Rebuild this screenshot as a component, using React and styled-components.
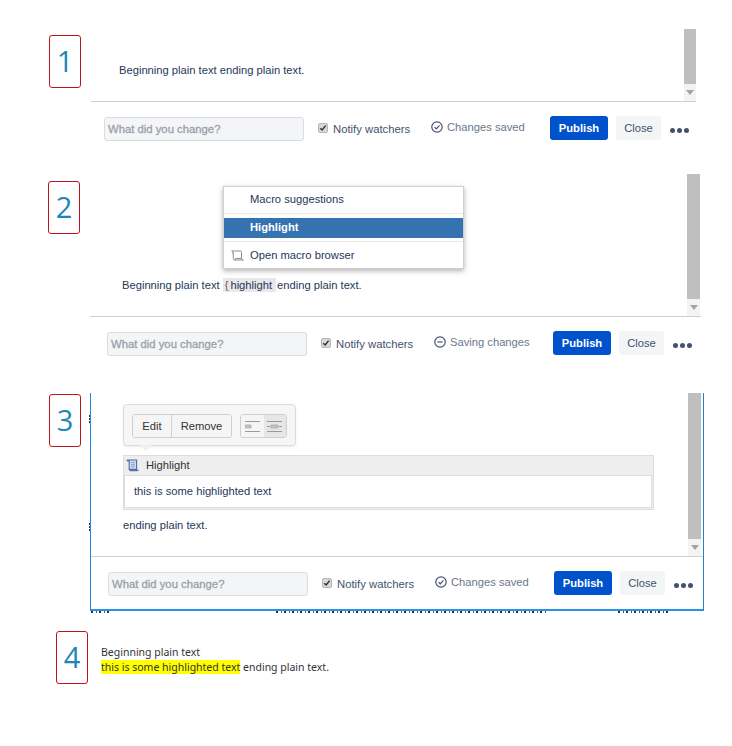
import React from "react";
import styled, { createGlobalStyle } from "styled-components";

const Global = createGlobalStyle`
  html, body { margin: 0; padding: 0; background: #fff; }
  body { font-family: "Liberation Sans", Arial, sans-serif; font-size: 11.2px; color: #172b4d; }
`;

const Page = styled.div`
  width: 732px;
  height: 746px;
  overflow: hidden;
  display: flex;
  flex-direction: column;
`;
const Section = styled.section`
  display: flex;
  align-items: flex-start;
  margin-top: ${(p) => p.$top}px;
  height: ${(p) => p.$height}px;
  padding-left: ${(p) => p.$left}px;
`;
const Badge = styled.div`
  flex: none;
  box-sizing: border-box;
  width: 32px;
  height: 53px;
  margin-top: ${(p) => p.$top}px;
  margin-right: ${(p) => p.$right}px;
  border: 1px solid #c0141c;
  border-radius: 3px;
  color: #1b86b7;
  font-family: "Open Sans", sans-serif;
  font-weight: 400;
  font-size: 29px;
  line-height: 49px;
  text-align: center;
`;
const Panel = styled.div`
  position: relative;
  box-sizing: border-box;
  width: ${(p) => p.$width}px;
  ${(p) => p.$framed && `
    border-left: 1px solid #1f8ae6;
    border-right: 1px solid #2b7fc4;
    border-bottom: 2px solid #2b93e6;
    height: 218px;
  `}
`;
const Body = styled.div`
  display: flex;
  height: ${(p) => p.$height}px;
  border-bottom: 1px solid #cfcfcf;
`;
const Content = styled.div`
  flex: 1;
  min-width: 0;
  padding-top: ${(p) => p.$top}px;
  padding-left: ${(p) => p.$left}px;
  padding-right: 30px;
`;
const Line = styled.div`
  font-size: 11.2px;
  line-height: 16px;
  color: #253858;
  white-space: nowrap;
`;
const Track = styled.div`
  flex: none;
  width: ${(p) => p.$width}px;
  margin-right: ${(p) => p.$right}px;
  display: flex;
  flex-direction: column;
`;
const Thumb = styled.div`
  flex: 1;
  background: #bfbfbf;
`;
const ArrowBox = styled.div`
  flex: none;
  height: 17px;
  background: #f3f3f3;
  display: flex;
  align-items: center;
  justify-content: center;
  &::after {
    content: "";
    border-left: 4px solid transparent;
    border-right: 4px solid transparent;
    border-top: 5px solid #a3a3a3;
  }
`;
const Footer = styled.div`
  display: flex;
  align-items: center;
  height: 24px;
  margin-top: 15px;
  padding-left: ${(p) => p.$left}px;
`;
const Input = styled.div`
  flex: none;
  box-sizing: border-box;
  width: 200px;
  height: 24px;
  padding-left: 3px;
  background: #f4f5f7;
  border: 1px solid #dadce2;
  border-radius: 3px;
  color: #9a9fa8;
  font-size: 11.3px;
  -webkit-text-stroke: 0.3px #9a9fa8;
  line-height: 22px;
`;
const Check = styled.div`
  flex: none;
  box-sizing: border-box;
  width: 10px;
  height: 10px;
  margin: 0 5px 2px 14px;
  background: #d9d9d9;
  border: 1px solid #b5b5b5;
  border-radius: 2px;
  display: flex;
  svg { display: block; }
`;
const Notify = styled.div`
  flex: none;
  width: 98px;
  font-size: 11.3px;
  color: #42526e;
  white-space: nowrap;
`;
const Status = styled.div`
  flex: none;
  width: 119px;
  margin-bottom: 4px;
  display: flex;
  align-items: center;
  gap: 4px;
  font-size: 11.2px;
  color: #6b778c;
  white-space: nowrap;
`;
const Publish = styled.div`
  flex: none;
  width: 58px;
  height: 24px;
  margin-bottom: 2px;
  border-radius: 3px;
  background: #0052cc;
  color: #fff;
  font-weight: 700;
  font-size: 11.2px;
  line-height: 24px;
  text-align: center;
`;
const Close = styled.div`
  flex: none;
  width: 45px;
  height: 24px;
  margin: 0 9px 2px 8px;
  border-radius: 3px;
  background: #f4f5f7;
  color: #42526e;
  font-size: 11.2px;
  line-height: 24px;
  text-align: center;
`;
const Dots = styled.div`
  flex: none;
  display: flex;
  gap: 2px;
  margin-top: 3px;
  span {
    width: 5px;
    height: 5px;
    border-radius: 50%;
    background: #42526e;
  }
`;

const Popup = styled.div`
  position: absolute;
  left: 133px;
  top: 12px;
  box-sizing: border-box;
  width: 241px;
  height: 83px;
  background: #fff;
  border: 1px solid #cfcfcf;
  box-shadow: 0 2px 5px rgba(0, 0, 0, 0.3);
`;
const PopupItem = styled.div`
  box-sizing: border-box;
  display: flex;
  align-items: center;
  height: ${(p) => p.$height}px;
  padding-left: ${(p) => (p.$icon ? 7 : 26)}px;
  padding-bottom: ${(p) => (p.$active ? 2 : 0)}px;
  gap: 6px;
  font-size: 11.2px;
  white-space: nowrap;
  color: ${(p) => (p.$active ? "#fff" : "#253858")};
  font-weight: ${(p) => (p.$active ? 700 : 400)};
  background: ${(p) => (p.$active ? "#3572b0" : "transparent")};
`;
const PopupRule = styled.div`
  height: 1px;
  background: #e9e9e9;
  margin: ${(p) => p.$margin};
`;
const Typed = styled.span`
  background: #e8e8e8;
  padding: 1px 4px 1px 2px;
  margin: 0 1px 0 3px;
  color: #253858;
  i { font-style: normal; color: #8a4a4a; margin-right: 2px; }
`;

const Toolbar = styled.div`
  position: relative;
  box-sizing: border-box;
  width: 173px;
  height: 42px;
  margin-top: 11px;
  padding: 9px 8px;
  display: flex;
  gap: 8px;
  background: #f6f6f6;
  border: 1px solid #dcdcdc;
  border-radius: 4px;
  box-shadow: 0 1px 2px rgba(0, 0, 0, 0.08);
  &::after {
    content: "";
    position: absolute;
    left: 16px;
    bottom: -6px;
    border-left: 6px solid transparent;
    border-right: 6px solid transparent;
    border-top: 6px solid #f1f1f1;
  }
`;
const Group = styled.div`
  display: flex;
  flex: none;
  height: 24px;
  box-sizing: border-box;
  border: 1px solid #cfcfcf;
  border-radius: 3px;
  overflow: hidden;
`;
const ToolButton = styled.div`
  box-sizing: border-box;
  width: ${(p) => p.$width}px;
  text-align: center;
  line-height: 22px;
  font-size: 11.2px;
  color: #333;
  background: #f5f5f5;
  & + & { border-left: 1px solid #cfcfcf; }
`;
const AlignButton = styled.div`
  width: 22.5px;
  display: flex;
  align-items: center;
  justify-content: center;
  background: ${(p) => (p.$active ? "#e6e6e6" : "#f5f5f5")};
`;
const Macro = styled.div`
  box-sizing: border-box;
  width: 531px;
  height: 55px;
  margin-top: 9px;
  border: 1px solid #dddddd;
  background: #eeeeee;
`;
const MacroHead = styled.div`
  display: flex;
  align-items: center;
  gap: 6px;
  height: 18px;
  padding-left: 2px;
  font-size: 11.2px;
  color: #333;
`;
const MacroBody = styled.div`
  box-sizing: border-box;
  height: 33px;
  margin: 1px 1px 0 0;
  background: #fff;
  border: 1px solid #dddddd;
  padding-left: 9px;
  line-height: 30px;
  font-size: 11.2px;
  color: #253858;
`;
const After = styled(Line)`
  margin-top: 7px;
`;
const Residue = styled.div`
  position: absolute;
  left: ${(p) => p.$left}px;
  top: 218px;
  width: ${(p) => p.$width}px;
  height: 2px;
  background: repeating-linear-gradient(90deg, #26324a 0 2px, transparent 2px 5px, #4a5568 5px 6px, transparent 6px 8px);
`;
const SideTick = styled.div`
  position: absolute;
  left: -2px;
  top: ${(p) => p.$top}px;
  width: 1px;
  height: ${(p) => p.$height}px;
  background: repeating-linear-gradient(180deg, #26324a 0 2px, transparent 2px 3px);
`;

const Published = styled.div`
  margin-top: 14px;
  font-family: "Noto Sans", "Open Sans", sans-serif;
  font-size: 10.5px;
  line-height: 15px;
  color: #333;
  white-space: nowrap;
`;
const Mark = styled.mark`
  background: #ffff00;
  color: #333;
`;

const SavedIcon = () => (
  <svg width="12" height="12" viewBox="0 0 12 12" fill="none" stroke="#42526e" strokeWidth="1.2">
    <circle cx="6" cy="6" r="5.2" />
    <path d="M3.6 6.2 5.3 7.8 8.5 4.4" />
  </svg>
);
const SavingIcon = () => (
  <svg width="12" height="12" viewBox="0 0 12 12" fill="none" stroke="#42526e" strokeWidth="1.2">
    <circle cx="6" cy="6" r="5.2" />
    <path d="M3.4 6h5.2" />
  </svg>
);
const BrowserIcon = () => (
  <svg width="13" height="11" viewBox="0 0 13 11" fill="none" stroke="#8b8b8b" strokeWidth="1">
    <path d="M.7 1h8.6c1 0 1.2.6 1.2 1.4V8.5M.7 1c.8 0 1.3.6 1.3 1.4 0 .7-.4 1-.9 1M2.3 2.5V8c0 1 .3 2 1.2 2h8.8c-.9 0-1.8-.6-1.8-1.6H4.5c0 .9-.3 1.6-1 1.6" />
  </svg>
);
const MacroIcon = () => (
  <svg width="14" height="13" viewBox="0 0 14 13">
    <path d="M1 1h9.6v9.4H3.2V3.2C3.2 2 2.3 1 1 1Z" fill="#cfdcee" stroke="#4a6aa5" strokeWidth="1.1" />
    <path d="M3 10.8h10c-.4 1-1 1.4-1.8 1.4H4.5c-.8 0-1.5-.5-1.5-1.4Z" fill="#5676ad" />
    <path d="M5 3.6h3.8M5 5.6h3.8M5 7.6h3.8" stroke="#7f97c2" strokeWidth=".9" />
    <path d="M.6 1.2c.8 0 1.1.8 1.1 1.6" fill="none" stroke="#4a6aa5" />
  </svg>
);
const AlignIcon = ({ center }) => (
  <svg width="15" height="11" viewBox="0 0 15 11" fill="none" stroke="#9a9a9a">
    <path d="M0 .5h15M0 10.5h15" />
    <path d={center ? "M4 4h7v3H4z" : "M0 4h6v3H0z"} fill="#c4c4c4" stroke="#9a9a9a" strokeWidth=".6" />
    {center && <path d="M0 5.5h3M12 5.5h3" />}
  </svg>
);

const EditorFooter = ({ left, saving }) => (
  <Footer $left={left}>
    <Input>What did you change?</Input>
    <Check>
      <svg width="8" height="8" viewBox="0 0 8 8" fill="none" stroke="#333" strokeWidth="1.5">
        <path d="M1.2 4.2 3.2 6 6.6 1.6" />
      </svg>
    </Check>
    <Notify>Notify watchers</Notify>
    <Status>
      {saving ? <SavingIcon /> : <SavedIcon />}
      {saving ? "Saving changes" : "Changes saved"}
    </Status>
    <Publish>Publish</Publish>
    <Close>Close</Close>
    <Dots>
      <span />
      <span />
      <span />
    </Dots>
  </Footer>
);

const Scrollbar = ({ width = 12, right = 0 }) => (
  <Track $width={width} $right={right}>
    <Thumb />
    <ArrowBox />
  </Track>
);

export default function App() {
  return (
    <Page>
      <Global />
      <Section $top={29} $height={121} $left={49}>
        <Badge $top={6} $right={10}>1</Badge>
        <Panel $width={605}>
          <Body $height={72}>
            <Content $top={33} $left={28}>
              <Line>Beginning plain text ending plain text.</Line>
            </Content>
            <Scrollbar />
          </Body>
          <EditorFooter left={13} />
        </Panel>
      </Section>

      <Section $top={24} $height={195} $left={48}>
        <Badge $top={7} $right={10}>2</Badge>
        <Panel $width={611}>
          <Popup>
            <PopupItem $height={24}>Macro suggestions</PopupItem>
            <PopupRule $margin="2px 0 4px" />
            <PopupItem $height={20} $active>Highlight</PopupItem>
            <PopupRule $margin="3px 0 0" />
            <PopupItem $height={26} $icon>
              <BrowserIcon />
              Open macro browser
            </PopupItem>
          </Popup>
          <Body $height={142}>
            <Content $top={103} $left={32}>
              <Line>
                Beginning plain text<Typed><i>{"{"}</i>highlight</Typed>ending plain text.
              </Line>
            </Content>
            <Scrollbar width={13} right={1} />
          </Body>
          <EditorFooter left={17} saving />
        </Panel>
      </Section>

      <Section $top={24} $height={218} $left={49}>
        <Badge $top={1} $right={9}>3</Badge>
        <Panel $width={614} $framed>
          <SideTick $top={22} $height={9} />
          <SideTick $top={130} $height={9} />
          <Residue $left={0} $width={20} />
          <Residue $left={185} $width={270} />
          <Residue $left={527} $width={51} />
          <Body $height={163}>
            <Content $top={0} $left={32}>
              <Toolbar>
                <Group>
                  <ToolButton $width={38}>Edit</ToolButton>
                  <ToolButton $width={60}>Remove</ToolButton>
                </Group>
                <Group>
                  <AlignButton><AlignIcon /></AlignButton>
                  <AlignButton $active><AlignIcon center /></AlignButton>
                </Group>
              </Toolbar>
              <Macro>
                <MacroHead>
                  <MacroIcon />
                  Highlight
                </MacroHead>
                <MacroBody>this is some highlighted text</MacroBody>
              </Macro>
              <After>ending plain text.</After>
            </Content>
            <Scrollbar width={13} right={2} />
          </Body>
          <EditorFooter left={17} />
        </Panel>
      </Section>

      <Section $top={20} $height={53} $left={56}>
        <Badge $top={0} $right={13}>4</Badge>
        <Published>
          Beginning plain text
          <br />
          <Mark>this is some highlighted text</Mark> ending plain text.
        </Published>
      </Section>
    </Page>
  );
}
